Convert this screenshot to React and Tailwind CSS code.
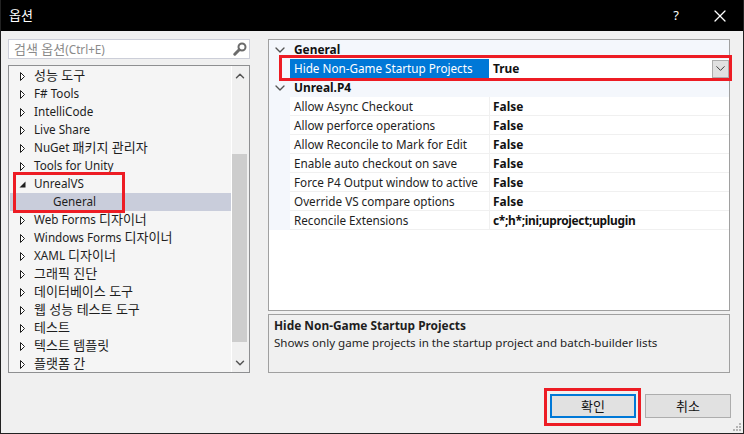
import React from 'react';
import { ChevronDown, ChevronUp, X } from 'lucide-react';

const treeItems = [
  { label: '성능 도구' },
  { label: 'F# Tools' },
  { label: 'IntelliCode' },
  { label: 'Live Share' },
  { label: 'NuGet 패키지 관리자' },
  { label: 'Tools for Unity' },
  { label: 'UnrealVS', open: true },
  { label: 'General', child: true },
  { label: 'Web Forms 디자이너' },
  { label: 'Windows Forms 디자이너' },
  { label: 'XAML 디자이너' },
  { label: '그래픽 진단' },
  { label: '데이터베이스 도구' },
  { label: '웹 성능 테스트 도구' },
  { label: '테스트' },
  { label: '텍스트 템플릿' },
  { label: '플랫폼 간' },
];

const p4Rows = [
  ['Allow Async Checkout', 'False', ''],
  ['Allow perforce operations', 'False', ''],
  ['Allow Reconcile to Mark for Edit', 'False', ''],
  ['Enable auto checkout on save', 'False', ''],
  ['Force P4 Output window to active', 'False', ''],
  ['Override VS compare options', 'False', ''],
  ['Reconcile Extensions', 'c*;h*;ini;uproject;uplugin', 'tracking-[-0.3px]'],
];

const hasHangul = (text) => /[가-힣]/.test(text);

// Hangul runs are set a little larger than the latin text around them
function Label({ text }) {
  const parts = text.split(/([가-힣][가-힣 ]*)/).filter(Boolean);
  return (
    <span className="whitespace-pre">
      {parts.map((part, i) =>
        hasHangul(part) ? (
          <span key={i} className="text-[13px]">{part}</span>
        ) : (
          <span key={i}>{part}</span>
        )
      )}
    </span>
  );
}

function Triangle({ open }) {
  if (open) {
    return (
      <svg width="7" height="7" viewBox="0 0 7 7" className="ml-[10px] mr-[8px] shrink-0">
        <path d="M6.5 0.5V6.5H0.5Z" fill="#1e1e1e" />
      </svg>
    );
  }
  return (
    <svg width="7" height="11" viewBox="0 0 7 11" className="ml-[10px] mr-[8px] shrink-0">
      <path d="M1.5 1.5V9.5L5.5 5.5Z" fill="#fff" stroke="#1e1e1e" />
    </svg>
  );
}

function TreeRow({ item }) {
  if (item.child) {
    return (
      <div className="ml-[1px] flex h-[18px] items-center bg-[#c9cddb] pl-[43px] text-[#1e1e1e]">{item.label}</div>
    );
  }
  return (
    <div className="flex h-[18px] items-center text-[#1e1e1e]">
      <Triangle open={item.open} />
      <span className={hasHangul(item.label) ? 'pb-[2px]' : ''}>
        <Label text={item.label} />
      </span>
    </div>
  );
}

function GroupRow({ label }) {
  return (
    <div className="flex h-[19px] items-center text-[11.9px] font-bold text-[#111]">
      <span className="flex w-[21px] justify-center">
        <ChevronDown size={16} strokeWidth={2} className="text-[#555]" />
      </span>
      <span className="pl-[4px]">{label}</span>
    </div>
  );
}

export default function App() {
  return (
    <div
      className="relative flex h-[434px] w-[744px] flex-col overflow-hidden border-x border-b border-[#222] bg-[#f0f0f0] text-[11.7px] leading-none"
      style={{ fontFamily: '"Noto Sans", "Noto Sans CJK KR", sans-serif' }}
    >
      {/* Title bar */}
      <div className="flex h-[31px] shrink-0 items-center bg-black text-white">
        <span className="pl-[8px]"><Label text="옵션" /></span>
        <span className="ml-auto mr-[31px] text-[13px]">?</span>
        <X size={20} strokeWidth={1.5} className="mr-[13px]" />
      </div>

      <div className="flex flex-1 px-[7px] pt-[8px]">
        {/* Left column */}
        <div className="flex w-[242px] shrink-0 flex-col">
          <div className="flex h-[20px] items-center border border-[#ccced8] bg-white pl-[5px] pr-[2px] text-[#8a8a8a]">
            <Label text="검색 옵션(Ctrl+E)" />
            <svg width="14" height="14" viewBox="0 0 14 14" className="ml-auto">
              <circle cx="9" cy="5" r="3.5" fill="none" stroke="#6b6b6b" strokeWidth="2" />
              <path d="M6.2 7.8L1.8 12.2" stroke="#6b6b6b" strokeWidth="3" strokeLinecap="round" />
            </svg>
          </div>
          <div className="mt-[6px] flex h-[308px] overflow-hidden border border-[#8e8f91] bg-[#f5f5f5]">
            <div className="flex-1 overflow-hidden pt-[1px]">
              {treeItems.map((item) => (
                <TreeRow key={item.label} item={item} />
              ))}
            </div>
            <div className="flex w-[18px] shrink-0 flex-col items-center border-l border-white bg-[#f0f0f0] pr-[2px]">
              <ChevronUp size={14} strokeWidth={2.5} className="mt-[3px] text-[#555]" />
              <div className="mt-[71px] h-[188px] w-full bg-[#cdcdcd]" />
              <ChevronDown size={14} strokeWidth={2.5} className="mt-[14px] text-[#555]" />
            </div>
          </div>
        </div>

        {/* Right column */}
        <div className="ml-[18px] flex w-[462px] shrink-0 flex-col">
          <div className="h-[272px] border border-[#a0a0a0] bg-white">
            <div className="bg-[#f4f7fc]">
              <GroupRow label="General" />
              <div className="flex h-[19px]">
                <div className="w-[21px] shrink-0" />
                <div className="flex w-[199px] shrink-0 items-center bg-[#0078d7] pl-[4px] text-white">
                  Hide Non-Game Startup Projects
                </div>
                <div className="flex flex-1 items-center bg-white pl-[4px] text-[11.9px] font-bold text-[#111]">
                  True
                  <span className="ml-auto flex h-[18px] w-[17px] items-center justify-center border border-[#adadad] bg-[#e1e1e1]">
                    <ChevronDown size={15} strokeWidth={1.5} className="text-[#333]" />
                  </span>
                </div>
              </div>
              <GroupRow label="Unreal.P4" />
              {p4Rows.map(([name, value, spacing]) => (
                <div key={name} className="flex h-[19px]">
                  <div className="w-[21px] shrink-0" />
                  <div className="flex w-[199px] shrink-0 items-center border-b border-[#f0f0f0] bg-white pl-[4px] pt-[1px] whitespace-nowrap text-[#1e1e1e]">
                    {name}
                  </div>
                  <div className={`flex flex-1 items-center border-b border-l border-[#f0f0f0] bg-white pl-[3px] pt-[1px] text-[11.9px] font-bold text-[#111] ${spacing}`}>
                    {value}
                  </div>
                </div>
              ))}
            </div>
          </div>
          <div className="mt-[3px] h-[59px] border border-[#a0a0a0] bg-[#f0f0f0] px-[5px] pt-[1px] text-[#1e1e1e]">
            <div className="h-[18px] text-[11.9px] font-bold leading-[18px]">Hide Non-Game Startup Projects</div>
            <div className="text-[11.6px] leading-[18px]">Shows only game projects in the startup project and batch-builder lists</div>
          </div>
        </div>
      </div>

      {/* Footer buttons */}
      <div className="relative flex h-[39px] shrink-0 justify-end pr-[12px]">
        <button className="h-[24px] w-[86px] border-2 border-[#0078d7] bg-[#e1e1e1] text-[#111]"><Label text="확인" /></button>
        <button className="ml-[9px] h-[24px] w-[86px] border border-[#adadad] bg-[#e1e1e1] text-[#111]"><Label text="취소" /></button>
        <svg width="9" height="9" viewBox="0 0 9 9" className="absolute bottom-[1px] right-[1px]" fill="#b4b4b4">
          <rect x="6" y="0" width="2" height="2" />
          <rect x="3" y="3" width="2" height="2" />
          <rect x="6" y="3" width="2" height="2" />
          <rect x="0" y="6" width="2" height="2" />
          <rect x="3" y="6" width="2" height="2" />
          <rect x="6" y="6" width="2" height="2" />
        </svg>
      </div>

      {/* Annotation boxes */}
      <div className="absolute left-[12px] top-[172px] h-[41px] w-[112px] border-[3px] border-[#ed1c24]" />
      <div className="absolute left-[278px] top-[55px] h-[26px] w-[453px] border-[3px] border-[#ed1c24]" />
      <div className="absolute left-[543px] top-[388px] h-[38px] w-[97px] border-[3px] border-[#ed1c24]" />
    </div>
  );
}
